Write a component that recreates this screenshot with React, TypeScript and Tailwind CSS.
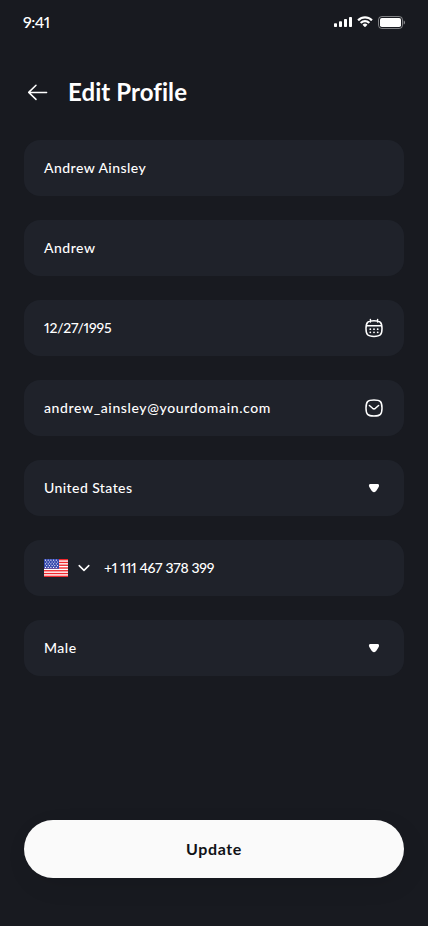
import type { ReactNode } from 'react'
import clsx from 'clsx'

type Field = {
  id: string
  value: string
  tracking: string
  icon?: ReactNode
  prefix?: ReactNode
}

function SignalIcon() {
  return (
    <svg width="18" height="10" viewBox="0 0 18 10" fill="#fff">
      <rect x="0" y="6.2" width="3" height="3.8" rx="0.8" />
      <rect x="5" y="4.2" width="3" height="5.8" rx="0.8" />
      <rect x="10" y="2" width="3" height="8" rx="0.8" />
      <rect x="15" y="0" width="3" height="10" rx="0.8" />
    </svg>
  )
}

function WifiIcon() {
  return (
    <svg width="16" height="12" viewBox="0 0 16 12" fill="#fff">
      <path d="M8 2.6c2.2 0 4.3.85 5.9 2.35.12.12.3.12.43 0l1.15-1.17a.32.32 0 0 0 0-.46C11.3-.68 4.7-.68.52 3.32a.32.32 0 0 0 0 .46l1.15 1.17c.12.12.31.12.43 0A8.6 8.6 0 0 1 8 2.6Z" />
      <path d="M8 6.35c1.2 0 2.37.45 3.27 1.26.12.11.31.11.43-.01l1.15-1.17a.32.32 0 0 0 0-.46 7.07 7.07 0 0 0-9.7 0 .32.32 0 0 0 0 .46L4.3 7.6c.12.12.3.12.43.01A4.88 4.88 0 0 1 8 6.35Z" />
      <path d="M10.25 8.92a.32.32 0 0 0 0-.47 3.55 3.55 0 0 0-4.5 0 .32.32 0 0 0 0 .47l1.99 2.02c.15.14.37.14.52 0l1.99-2.02Z" />
    </svg>
  )
}

function BatteryIcon() {
  return (
    <svg width="27" height="13" viewBox="0 0 27 13" fill="none">
      <rect x="0.5" y="0.5" width="24" height="12" rx="3.3" stroke="#fff" strokeOpacity="0.45" />
      <rect x="2" y="2" width="21" height="9" rx="1.8" fill="#fff" />
      <path d="M25.7 4.5v4c.8-.33 1.3-1.1 1.3-2s-.5-1.67-1.3-2Z" fill="#fff" fillOpacity="0.5" />
    </svg>
  )
}

function BackIcon() {
  return (
    <svg width="28" height="28" viewBox="0 0 28 28" fill="none" stroke="#fff" strokeWidth="1.5" strokeLinecap="round" strokeLinejoin="round">
      <path d="M22.6 14.4H4.7M12 7.3l-7.3 7.1L12 21.4" />
    </svg>
  )
}

function CalendarIcon() {
  return (
    <svg width="20" height="20" viewBox="0 0 20 20" fill="none" stroke="#fff" strokeWidth="1.5" strokeLinecap="round">
      <path d="M10 2.8c6.4 0 8 1.6 8 7.8 0 6.2-1.6 7.8-8 7.8s-8-1.6-8-7.8c0-6.2 1.6-7.8 8-7.8ZM2.2 7.8h15.6M6.4 1.5v2.6M13.6 1.5v2.6" />
      <path d="M6.3 11.2h.01M10 11.2h.01M13.7 11.2h.01M6.3 14.3h.01M10 14.3h.01M13.7 14.3h.01" strokeWidth="1.8" />
    </svg>
  )
}

function MailIcon() {
  return (
    <svg width="20" height="20" viewBox="0 0 20 20" fill="none" stroke="#fff" strokeWidth="1.5" strokeLinecap="round" strokeLinejoin="round">
      <path d="M10 2c6.4 0 8 1.7 8 8s-1.6 8-8 8-8-1.7-8-8 1.6-8 8-8Z" />
      <path d="M5.4 7.5 8.6 10.3c.9.75 1.9.75 2.8 0l3.2-2.8" />
    </svg>
  )
}

function CaretIcon() {
  return (
    <svg width="20" height="20" viewBox="0 0 20 20" fill="#fff">
      <path d="M6.3 6.1C8 5.8 12 5.8 13.7 6.1c1.2.2 1.7 1.3 1.2 2.3-.7 1.5-2 3.7-3.3 5.2-.9 1-2.3 1-3.2 0-1.3-1.5-2.6-3.7-3.3-5.2-.5-1 0-2.1 1.2-2.3Z" />
    </svg>
  )
}

function UsFlag() {
  return (
    <svg width="24" height="18" viewBox="0 0 24 18">
      <rect width="24" height="18" fill="#fff" />
      {[0, 1, 2, 3, 4, 5, 6].map((i) => (
        <rect key={i} y={(i * 36) / 13} width="24" height={18 / 13} fill="#f0282d" />
      ))}
      <rect width="15" height="9.7" fill="#3448ad" />
      {[0, 1, 2, 3, 4].map((row) =>
        [0, 1, 2, 3, 4].map((col) => (
          <circle key={`${row}-${col}`} cx={1.5 + col * 2.7 + (row % 2) * 1.2} cy={1.2 + row * 1.8} r="0.6" fill="#fff" />
        ))
      )}
    </svg>
  )
}

// Flag and chevron of the dial code picker
function DialCode() {
  return (
    <span className="mr-3 flex items-center gap-2">
      <UsFlag />
      <svg width="16" height="16" viewBox="0 0 16 16" fill="none" stroke="#fff" strokeWidth="1.5" strokeLinecap="round" strokeLinejoin="round">
        <path d="m3.2 5.6 4.8 4.8 4.8-4.8" />
      </svg>
    </span>
  )
}

const FIELDS: Field[] = [
  { id: 'name', value: 'Andrew Ainsley', tracking: 'tracking-[0.45px]' },
  { id: 'nickname', value: 'Andrew', tracking: 'tracking-[0.5px]' },
  { id: 'birthday', value: '12/27/1995', tracking: 'tracking-[-0.2px]', icon: <CalendarIcon /> },
  { id: 'email', value: 'andrew_ainsley@yourdomain.com', tracking: 'tracking-[0.62px]', icon: <MailIcon /> },
  { id: 'country', value: 'United States', tracking: 'tracking-[0.42px]', icon: <CaretIcon /> },
  { id: 'phone', value: '+1 111 467 378 399', tracking: 'tracking-[-0.3px]', prefix: <DialCode /> },
  { id: 'gender', value: 'Male', tracking: 'tracking-[0.5px]', icon: <CaretIcon /> },
]

export default function App() {
  return (
    <main className="flex h-[926px] w-[428px] flex-col overflow-hidden bg-[#181a20] font-['Lato','Noto_Sans',sans-serif] text-white">
      <div className="flex h-11 items-center justify-between px-[23px]">
        <span className="text-base leading-5 font-medium tracking-[-0.5px] proportional-nums">9:41</span>
        <div className="flex items-center gap-[5px]">
          <SignalIcon />
          <WifiIcon />
          <BatteryIcon />
        </div>
      </div>

      <header className="mt-6 flex h-12 items-center gap-4 px-6">
        <button type="button" aria-label="Back">
          <BackIcon />
        </button>
        <h1 className="text-2xl font-bold tracking-[0.08px]">Edit Profile</h1>
      </header>

      <form className="mt-6 flex flex-col gap-6 px-6">
        {FIELDS.map((f) => (
          <div key={f.id} className="flex h-14 items-center rounded-2xl bg-[#1f222a] px-5">
            {f.prefix}
            <span className={clsx('flex-1 text-sm font-medium whitespace-nowrap proportional-nums', f.tracking)}>
              {f.value}
            </span>
            {f.icon}
          </div>
        ))}
      </form>

      <div className="mt-auto px-6 pb-12">
        <button
          type="button"
          className="h-[58px] w-full rounded-full bg-[#fafafa] text-base font-bold tracking-[0.6px] text-[#101116] shadow-[4px_8px_24px_rgba(0,0,0,0.08)]"
        >
          Update
        </button>
      </div>
    </main>
  )
}
